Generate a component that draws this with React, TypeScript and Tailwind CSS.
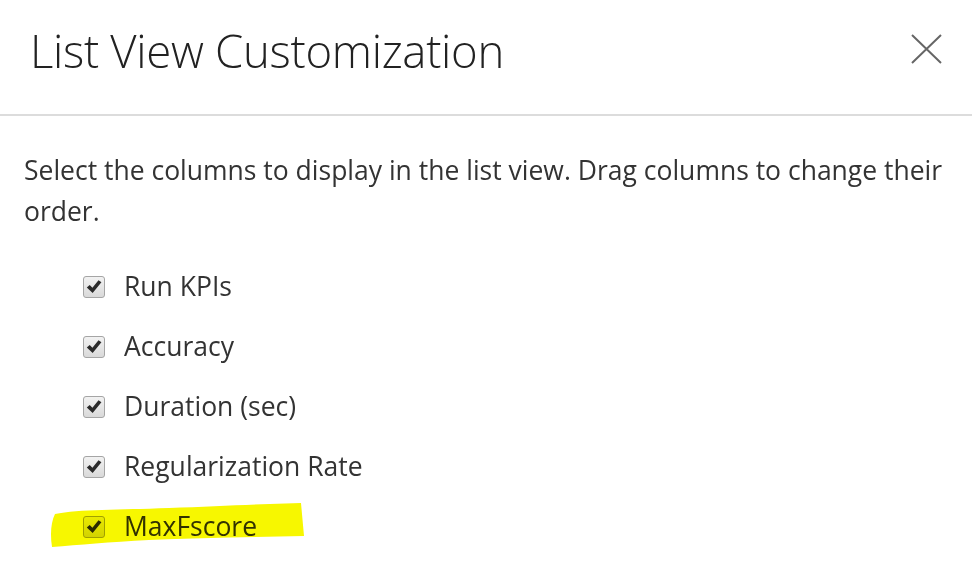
const columns = [
  { name: "Run KPIs", marked: false },
  { name: "Accuracy", marked: false },
  { name: "Duration (sec)", marked: false },
  { name: "Regularization Rate", marked: false },
  { name: "MaxFscore", marked: true },
];

function CheckBox() {
  return (
    <span className="flex h-[22px] w-[22px] items-center justify-center rounded-[3px] border border-[#a5a5a5] bg-gradient-to-b from-[#f2f2f2] to-[#d9d9d9]">
      <svg width="18" height="18" viewBox="0 0 16 16">
        <path d="M1.6 8.4 L4.2 6.2 L6.6 8.7 L12 1.9 L14.6 3.8 L6.8 13.4 Z" fill="#2a2a2a" />
      </svg>
    </span>
  );
}

function App() {
  return (
    <div
      className="h-[583px] w-[972px] overflow-hidden bg-white text-[#333]"
      style={{ fontFamily: '"Open Sans", "Noto Sans", sans-serif' }}
    >
      {/* header */}
      <div className="flex h-[116px] items-start justify-between border-b-2 border-[#dcdcdc] pl-[30px] pr-[30px] pt-[20px]">
        <h1 className="text-[45.5px] font-light leading-[60px] tracking-[-0.3px] text-[#222]">
          List View Customization
        </h1>
        <button className="mt-[14px] text-[#666]">
          <svg width="31" height="30" viewBox="0 0 31 30" fill="none" stroke="currentColor" strokeWidth="2">
            <path d="M1 1 L30 29 M30 1 L1 29" />
          </svg>
        </button>
      </div>

      {/* body */}
      <div className="px-[24px] pt-[34px]">
        <p className="text-[26.5px] leading-[41px] text-[#333]">
          Select the columns to display in the list view. Drag columns to change their order.
        </p>

        <ul className="mt-[40px] flex flex-col gap-[30px] pl-[59px]">
          {columns.map((col) => (
            <li key={col.name} className="relative flex h-[30px] items-center gap-[19px]">
              <CheckBox />
              <span className="text-[26.5px] text-[#333]">{col.name}</span>
              {col.marked && (
                // marker highlight drawn over the row
                <svg
                  className="pointer-events-none absolute left-[-34px] top-[-10px] mix-blend-multiply"
                  width="258"
                  height="46"
                  viewBox="0 0 258 46"
                >
                  <path
                    d="M6 12 C30 7 70 8 120 6 C170 4 210 2 252 1 L255 34 C200 35 150 36 100 38 C60 40 30 43 3 45 C1 32 2 20 6 12 Z"
                    fill="#f7f700"
                  />
                </svg>
              )}
            </li>
          ))}
        </ul>
      </div>
    </div>
  );
}

export default App;
